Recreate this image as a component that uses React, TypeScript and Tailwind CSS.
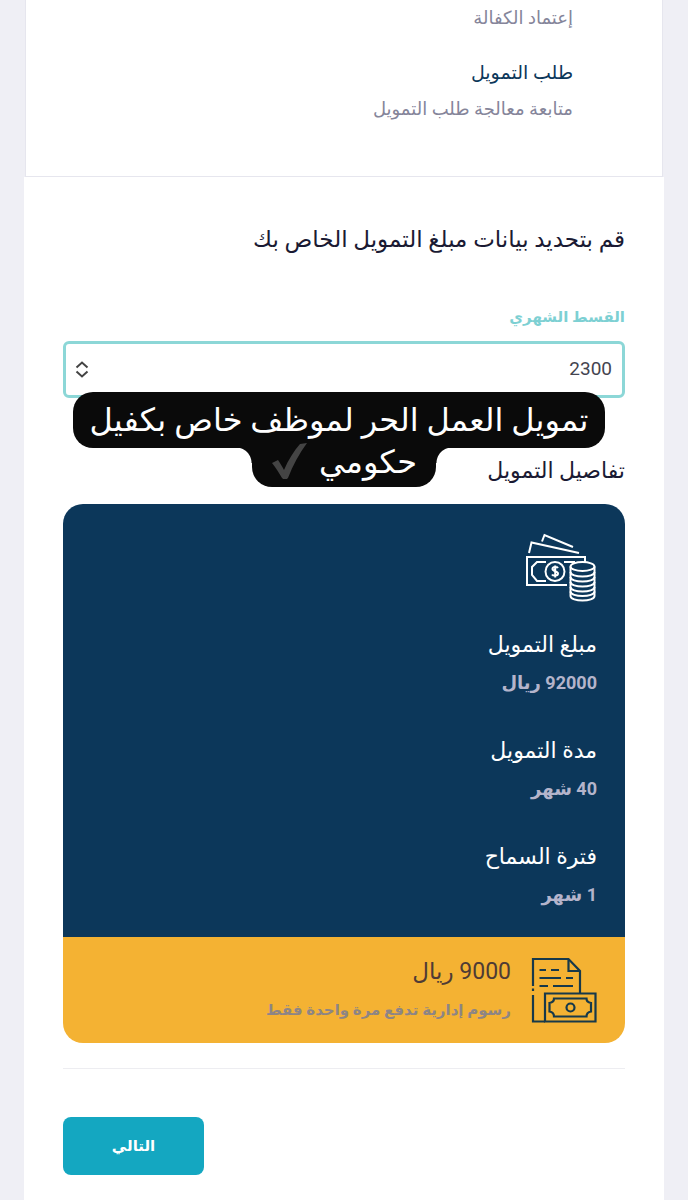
const steps = [
  { title: "", text: "إعتماد الكفالة" },
  { title: "طلب التمويل", text: "متابعة معالجة طلب التمويل" },
]

const details = [
  { label: "مبلغ التمويل", value: "92000 ريال" },
  { label: "مدة التمويل", value: "40 شهر" },
  { label: "فترة السماح", value: "1 شهر" },
]

function MoneyIcon() {
  return (
    <svg className="w-[72px] h-[70px]" viewBox="0 0 72 70" fill="none" stroke="white" strokeWidth="2">
      {/* Loose notes */}
      <path d="M4 21 L6.500 10.500 L54 21" />
      <path d="M17 9.500 L19.500 3 L48 15" />
      {/* Front note */}
      <path d="M42 53 H2 V25 H60 V31" />
      <path d="M21 30 H12 L7 35 V43 L12 49 H21" />
      <path d="M39 30 H50" />
      <circle cx="30" cy="39.500" r="9.500" />
      <path
        d="M33 36 C32 34.500 27.500 34.500 27.500 37 C27.500 39.500 33 39 33 41.500 C33 44.200 28 44 27 42.500 M30.200 33.500 V45.500"
        strokeWidth="2"
      />
      {/* Coins */}
      <ellipse cx="57.500" cy="34.500" rx="12" ry="4.500" />
      <path d="M45.500 34.500 V64 C45.500 70 69.500 70 69.500 64 V34.500" />
      <path d="M45.500 40 C45.500 46 69.500 46 69.500 40 M45.500 45 C45.500 51 69.500 51 69.500 45 M45.500 50 C45.500 56 69.500 56 69.500 50 M45.500 55 C45.500 61 69.500 61 69.500 55 M45.500 59.500 C45.500 65.500 69.500 65.500 69.500 59.500" />
    </svg>
  )
}

function InvoiceIcon() {
  return (
    <svg className="w-[66px] h-[66px] shrink-0" viewBox="0 0 66 66" fill="none" stroke="#17394a" strokeWidth="2.200">
      {/* Sheet */}
      <path d="M2 29 V2 H37.500 L49 14 V36" />
      <path d="M37.500 2 V14 H49" />
      <path d="M2 31.500 V34 M2 38 V64.500 H14" />
      <path d="M8.500 13 H15 M20 13 H28 M8.500 21 H30 M35 21 H42 M8.500 29 H17 M22 29 H42" />
      {/* Note */}
      <path d="M14 36.500 H64.500 V64.500 H14 Z" />
      <path d="M23 41.500 H55.500 C55.500 44 57.500 45.500 60 46 V54.500 C57.500 55 55.500 57 55.500 59.500 H23 C23 57 21 55 18.500 54.500 V46 C21 45.500 23 44 23 41.500 Z" />
      <circle cx="39.500" cy="50.500" r="4" />
    </svg>
  )
}

function Caption() {
  return (
    <div className="absolute top-[51px] left-[10px] right-5 z-10 flex flex-col items-center text-center text-white text-[32px] pointer-events-none">
      <p className="w-full h-[56px] rounded-[20px] bg-[#0a0a0a] leading-[56px] whitespace-nowrap">
        تمويل العمل الحر لموظف خاص بكفيل
      </p>
      <div className="flex -mt-px pl-[10px]">
        <span className="size-4 bg-[radial-gradient(circle_at_100%_100%,transparent_15px,#0a0a0a_16px)]" />
        <p className="flex items-start justify-center gap-3 w-[184px] h-[40px] rounded-b-[20px] bg-[#0a0a0a] leading-[30px]">
          حكومي
          <svg className="w-9 h-9 -mt-1" viewBox="0 0 36 36" fill="#444444">
            <path d="M1 20 L7 17 C9 20 11 23 13 27 C17 17 23 8 29 1 L36 0 C28 11 22 22 17 35 Q14 38 11 35 C8 30 5 25 1 20 Z" />
          </svg>
        </p>
        <span className="size-4 bg-[radial-gradient(circle_at_0%_100%,transparent_15px,#0a0a0a_16px)]" />
      </div>
    </div>
  )
}

export default function App() {
  return (
    <main
      dir="rtl"
      className="flex flex-col min-h-screen px-6 bg-[#efeff5] font-[Roboto,'DejaVu_Sans',sans-serif] text-[#1a1a33]"
    >
      {/* Steps */}
      <section className="mx-px pr-[89px] pb-[49px] bg-white border-x border-b border-[#e6e6ee] text-[18px] leading-9 text-[#85859a]">
        {steps.map((step, i) => (
          <div key={i} className={i > 0 ? "pt-[19px]" : ""}>
            {step.title && <h3 className="text-[19px] text-[#0c375a]">{step.title}</h3>}
            <p>{step.text}</p>
          </div>
        ))}
      </section>

      <section className="grow px-[39px] pt-[43px] pb-6 bg-white">
        <h1 className="text-[23px] leading-10">قم بتحديد بيانات مبلغ التمويل الخاص بك</h1>

        <label htmlFor="installment" className="block mt-[39px] mb-1.5 text-[15px] leading-9 font-bold text-[#7dd0d3]">
          القسط الشهري
        </label>
        <div className="relative">
          <select
            id="installment"
            className="block w-full h-[57px] px-[10px] appearance-none rounded-md border-[3px] border-[#8cd7d7] bg-white text-[19px] text-[#44444f]"
          >
            <option>2300</option>
          </select>
          <svg
            className="absolute left-3 top-5 w-[14px] h-[17px] pointer-events-none"
            viewBox="0 0 14 17"
            fill="none"
            stroke="#444"
            strokeWidth="2"
          >
            <path d="M1.500 6.500 L7 1.500 L12.500 6.500 M1.500 10.500 L7 15.500 L12.500 10.500" />
          </svg>
          <Caption />
        </div>

        <h2 className="mt-[53px] mb-[13px] text-[22px] leading-10">تفاصيل التمويل</h2>

        <div className="rounded-[20px] overflow-hidden">
          <div className="px-7 pt-7 pb-6 bg-[#0c375a]">
            <MoneyIcon />
            <dl className="flex flex-col gap-[30px] mt-[23px]">
              {details.map((item) => (
                <div key={item.label}>
                  <dt className="text-[22px] leading-10 text-white">{item.label}</dt>
                  <dd className="text-[18px] leading-9 font-bold text-[#b4b4cb]">{item.value}</dd>
                </div>
              ))}
            </dl>
          </div>
          <div className="flex items-center gap-5 h-[106px] px-7 bg-[#f4b233]">
            <InvoiceIcon />
            <div>
              <p className="text-[23px] leading-10 text-[#4f3b35]">9000 ريال</p>
              <p className="text-[15px] leading-9 font-bold text-[#8d8585]">رسوم إدارية تدفع مرة واحدة فقط</p>
            </div>
          </div>
        </div>

        <hr className="mt-[25px] mb-12 border-[#ededf1]" />

        <div className="flex justify-end">
          <button type="button" className="w-[141px] h-[58px] rounded-lg bg-[#14a7c1] text-[15px] font-bold text-white">
            التالي
          </button>
        </div>
      </section>
    </main>
  )
}
